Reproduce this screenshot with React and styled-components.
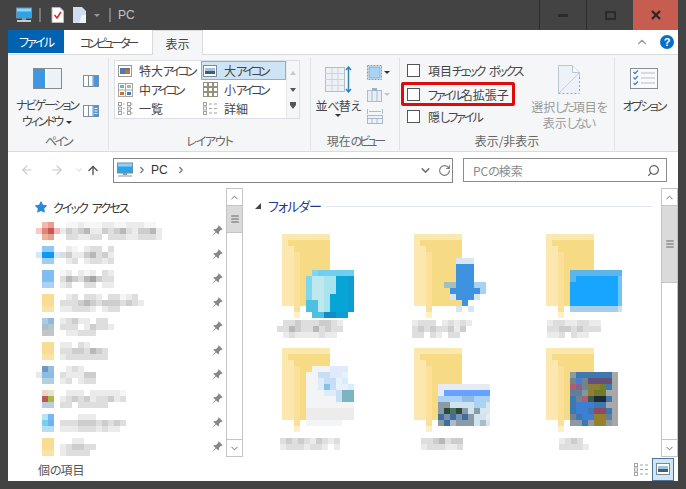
import React from 'react';
import styled, { createGlobalStyle } from 'styled-components';
import { ArrowLeft, ArrowRight, ArrowUp, ChevronDown, ChevronRight, ChevronUp, RotateCw, Search, Menu } from 'lucide-react';
import { BsPinAngleFill, BsStarFill } from 'react-icons/bs';

const GlobalStyle = createGlobalStyle`
  html, body { margin: 0; padding: 0; background: #434343; }
  * { box-sizing: border-box; }
  body {
    font-family: "Noto Sans CJK JP", "Noto Sans", sans-serif;
    font-feature-settings: "palt";
    font-size: 12px;
    color: #444;
  }
`;

// Kana run narrower than kanji in the original UI font
const Kana = styled.span`
  letter-spacing: ${p => p.$s ?? -1.8}px;
  word-spacing: 4px;
`;

// Window frame
const Frame = styled.div`
  width: 686px;
  height: 489px;
  background: #434343;
  padding: 0 8px 8px;
  display: flex;
  flex-direction: column;
  overflow: hidden;
`;

const TitleBar = styled.div`
  height: 30px;
  display: flex;
  align-items: center;
  margin-left: 8px;
  flex-shrink: 0;
`;

const TitleDivider = styled.span`
  width: 2px;
  height: 14px;
  background: #7a7a7a;
  margin: ${p => p.$margin};
`;

const TitleGap = styled.span`
  width: ${p => p.$width}px;
`;

const TitleText = styled.span`
  font-family: "Liberation Sans", sans-serif;
  font-size: 12px;
  color: #c4c4c4;
`;

const WindowButtons = styled.div`
  margin-left: auto;
  display: flex;
  height: 30px;
`;

const WindowButton = styled.div`
  width: ${p => (p.$close ? 45 : 47)}px;
  height: 100%;
  display: flex;
  align-items: center;
  justify-content: center;
  background: ${p => (p.$close ? '#c75c50' : 'transparent')};
  border-left: ${p => (p.$close ? 'none' : '1px solid #2c2c2c')};
  color: #2b2b2b;
`;

// Ribbon
const TabRow = styled.div`
  height: 25px;
  background: #fff;
  display: flex;
  align-items: stretch;
  border-bottom: 1px solid #dadbdc;
  flex-shrink: 0;
`;

const Tab = styled.div`
  width: ${p => p.$width}px;
  display: flex;
  align-items: center;
  justify-content: center;
  color: ${p => (p.$file ? '#fff' : '#444')};
  background: ${p => (p.$file ? '#0063b1' : p.$active ? '#f5f6f7' : '#fff')};
  border: ${p => (p.$active ? '1px solid #dadbdc' : 'none')};
  border-bottom: none;
  margin-bottom: ${p => (p.$active ? '-1px' : p.$file ? '1px' : '0')};
`;

const TabTools = styled.div`
  margin-left: auto;
  display: flex;
  align-items: center;
  gap: 11px;
  padding-right: 4px;
  color: #999;
`;

const HelpBadge = styled.div`
  width: 14px;
  height: 14px;
  border-radius: 50%;
  background: #0a6fc4;
  color: #fff;
  font-family: "Liberation Sans", sans-serif;
  font-size: 11px;
  font-weight: 700;
  display: flex;
  align-items: center;
  justify-content: center;
`;

const Ribbon = styled.div`
  height: 97px;
  background: #f5f6f7;
  border-bottom: 1px solid #dadbdc;
  display: flex;
  flex-shrink: 0;
`;

const Group = styled.div`
  width: ${p => p.$width}px;
  height: 92px;
  margin-top: 3px;
  display: flex;
  flex-direction: column;
  border-right: ${p => (p.$last ? 'none' : '1px solid #e1e3e6')};
`;

const GroupBody = styled.div`
  height: 76px;
  display: flex;
`;

const GroupLabel = styled.div`
  text-align: center;
  color: #666;
  line-height: 18px;
  white-space: nowrap;
`;

const LargeButton = styled.div`
  display: flex;
  flex-direction: column;
  align-items: center;
  flex-shrink: 0;
  width: ${p => p.$width}px;
  padding-top: ${p => p.$top || 0}px;
  line-height: 16px;
  text-align: center;
  white-space: nowrap;
  color: ${p => (p.$disabled ? '#9a9a9a' : '#444')};
`;

const IconSlot = styled.div`
  height: ${p => p.$height}px;
  display: flex;
  align-items: center;
  justify-content: center;
  margin-bottom: ${p => p.$after}px;
`;

const SmallIconColumn = styled.div`
  display: flex;
  flex-direction: column;
  gap: ${p => p.$gap}px;
  padding-top: ${p => p.$top}px;
  margin-left: ${p => p.$left}px;
`;

const SmallIconRow = styled.div`
  display: flex;
  align-items: center;
  gap: 2px;
`;

const Caret = styled.span`
  display: inline-block;
  width: 0;
  height: 0;
  border-left: 3px solid transparent;
  border-right: 3px solid transparent;
  border-top: 3px solid ${p => p.$color || '#333'};
  vertical-align: middle;
  margin-left: ${p => p.$left || 0}px;
`;

const Gallery = styled.div`
  margin: 2px 0 0 5px;
  width: 186px;
  height: 59px;
  display: flex;
  border: 1px solid #dcdfe3;
  background: #fff;
`;

const GalleryGrid = styled.div`
  width: 172px;
  display: grid;
  grid-template-columns: 85px 85px;
  grid-auto-rows: 19px;
  padding-left: 1px;
  border-right: 1px solid #e6e8ea;
`;

const GalleryItem = styled.div`
  display: flex;
  align-items: center;
  padding-left: 2px;
  white-space: nowrap;
  background: ${p => (p.$selected ? '#cde4f7' : 'transparent')};
  outline: ${p => (p.$selected ? '1px solid #7eb4e0' : 'none')};
  outline-offset: -1px;
`;

const GalleryIcon = styled.span`
  width: 21px;
  display: flex;
  flex-shrink: 0;
`;

const GalleryArrows = styled.div`
  flex: 1;
  background: #f5f6f7;
  display: flex;
  flex-direction: column;
  align-items: center;
  justify-content: space-around;
  padding: 3px 0;
`;

const ArrowGlyph = styled.span`
  width: 0;
  height: 0;
  border-left: 3px solid transparent;
  border-right: 3px solid transparent;
  ${p => (p.$up ? 'border-bottom: 4px solid #c8c8c8;' : 'border-top: 4px solid #555;')}
  ${p => p.$bar && 'box-shadow: 0 -3px 0 0 #555;'}
`;

const CheckList = styled.div`
  padding: 1px 0 0 1px;
  display: flex;
  flex-direction: column;
  width: 125px;
  flex-shrink: 0;
`;

const CheckRow = styled.div`
  height: 23px;
  width: ${p => (p.$marked ? '114px' : '124px')};
  padding-left: 6px;
  display: flex;
  align-items: center;
  gap: 8px;
  white-space: nowrap;
  color: #444;
  ${p => p.$marked && `
    height: 24px;
    margin-bottom: -1px;
    border-radius: 2px;
    box-shadow: inset 0 0 0 3px #e00b0b;
  `}
`;

const CheckBox = styled.span`
  width: 13px;
  height: 13px;
  flex-shrink: 0;
  border: 1px solid #555;
  background: #fff;
`;

// Address bar
const AddressRow = styled.div`
  height: 36px;
  background: #fff;
  display: flex;
  align-items: center;
  flex-shrink: 0;
`;

const NavButtons = styled.div`
  width: 105px;
  display: flex;
  align-items: center;
  padding-left: 12px;
  color: #c8c8c8;
`;

const NavSlot = styled.span`
  display: flex;
  flex-shrink: 0;
  width: ${p => p.$width}px;
  padding-left: ${p => p.$pad || 0}px;
  color: ${p => p.$color || 'inherit'};
`;

const AddressBox = styled.div`
  width: 340px;
  height: 25px;
  border: 1px solid #858585;
  display: flex;
  align-items: center;
  padding-left: 3px;
  color: #333;
  font-family: "Liberation Sans", sans-serif;
  font-size: 12px;
`;

const AddressTools = styled.div`
  margin-left: auto;
  display: flex;
  align-items: center;
  gap: 6px;
  padding-right: 1px;
  color: #777;
`;

const SearchBox = styled.div`
  width: 204px;
  height: 24px;
  margin-left: 10px;
  border: 1px solid #8c8c8c;
  display: flex;
  align-items: center;
  justify-content: space-between;
  padding: 0 6px 0 9px;
  color: #8a8a8a;
  svg { transform: scaleX(-1); color: #666; }
`;

// Main content
const Body = styled.div`
  height: 269px;
  background: #fff;
  display: flex;
  flex-shrink: 0;
  overflow: hidden;
`;

const Sidebar = styled.div`
  width: 218px;
  padding-top: 7px;
  overflow: hidden;
`;

const SideRow = styled.div`
  height: 24px;
  display: flex;
  align-items: center;
  position: relative;
  padding-left: ${p => p.$indent}px;
`;

const QuickLabel = styled.span`
  margin-left: 6px;
  color: #333;
`;

const PinSlot = styled.span`
  position: absolute;
  left: 204px;
  top: 6px;
  display: flex;
  color: #888;
`;

const Track = styled.div`
  width: 17px;
  display: flex;
  flex-direction: column;
  border: 1px solid #c4c4c4;
  flex-shrink: 0;
`;

const TrackButton = styled.div`
  height: 16px;
  display: flex;
  align-items: center;
  justify-content: center;
  color: #666;
  flex-shrink: 0;
`;

const Thumb = styled.div`
  height: ${p => p.$height}px;
  background: #dadada;
  border-top: 1px solid #c4c4c4;
  border-bottom: 1px solid #c4c4c4;
  display: flex;
  align-items: center;
  justify-content: center;
  color: #666;
  flex-shrink: 0;
`;

const TrackFill = styled.div`
  flex: 1;
  border-bottom: 1px solid #c4c4c4;
`;

const Content = styled.div`
  width: 418px;
  padding-left: 1px;
  display: flex;
  flex-direction: column;
  overflow: hidden;
`;

const SectionHead = styled.div`
  height: 46px;
  flex-shrink: 0;
  padding: 7px 8px 0 11px;
  display: flex;
  align-items: flex-start;
  color: #1e3a8c;
  font-size: 13px;
  line-height: 22px;
  white-space: nowrap;
`;

const SectionTriangle = styled.span`
  width: 0;
  height: 0;
  margin: 8px 7px 0 0;
  border-left: 6px solid transparent;
  border-bottom: 6px solid #444;
`;

const SectionLine = styled.span`
  flex: 1;
  height: 1px;
  margin: 11px 0 0 5px;
  background: #e2e8ee;
`;

const FolderGrid = styled.div`
  display: grid;
  flex-shrink: 0;
  grid-template-columns: repeat(3, 132px);
  grid-auto-rows: 114px;
`;

const FolderCell = styled.div`
  display: flex;
  flex-direction: column;
  align-items: center;
`;

const FolderLabel = styled.div`
  margin-top: ${p => p.$gap}px;
  display: flex;
`;

const StatusBar = styled.div`
  flex: 1;
  background: #fff;
  display: flex;
  align-items: center;
  padding-left: 30px;
  color: #555;
`;

const ViewSwitch = styled.div`
  margin-left: auto;
  display: flex;
  align-items: center;
  gap: 3px;
  padding-right: 4px;
`;

const ViewActive = styled.div`
  width: 22px;
  height: 23px;
  background: #cfe6f8;
  border: 1px solid #4a7396;
  display: flex;
  align-items: center;
  justify-content: center;
`;

// Drawn parts
const PcIcon = ({ width = 16 }) => (
  <svg width={width} height={width} viewBox="0 0 16 16">
    <rect x="0.5" y="1" width="15" height="10" fill="#2ba4ea" stroke="#6d8fa8" />
    <rect x="1" y="1.5" width="14" height="3" fill="#8fd4f7" />
    <rect x="6" y="11" width="4" height="2" fill="#8b9aa5" />
    <rect x="1" y="13" width="14" height="2" fill="#c3c9cd" />
  </svg>
);

const NoteIcon = () => (
  <svg width="13" height="16" viewBox="0 0 13 16">
    <path d="M1 .5h8l3.5 3.5v11.5H1z" fill="#fff" stroke="#b8b8b8" />
    <path d="M3.5 8l2.5 3 4-6" fill="none" stroke="#d22d2d" strokeWidth="1.6" />
  </svg>
);

const BlankDocIcon = () => (
  <svg width="13" height="16" viewBox="0 0 13 16">
    <path d="M0 0h9l4 4v12H0z" fill="#cfdded" />
    <path d="M9 8h4v8H6z" fill="#f0f4f8" />
  </svg>
);

const NavPaneIcon = () => (
  <svg width="29" height="21" viewBox="0 0 29 21">
    <rect x="0.5" y="0.5" width="28" height="20" fill="#fff" stroke="#8a8a8a" />
    <rect x="1" y="1" width="11" height="19" fill="#3f97e4" />
    <path d="M14 1h14v19H14z" fill="#edf2f7" />
  </svg>
);

const PaneIcon = ({ lines }) => (
  <svg width="16" height="12" viewBox="0 0 16 12">
    <rect x="0.5" y="0.5" width="15" height="11" fill="#fff" stroke="#7a8fa3" />
    <path d="M5.5 0v12M10 0v12" stroke="#7a8fa3" />
    <rect x="10.5" y="1" width="4.5" height="10" fill="#3d9ae8" />
    {lines && <path d="M11.5 3.5h3M11.5 6h3M11.5 8.5h3" stroke="#fff" />}
  </svg>
);

const LayoutIcon = ({ kind }) => {
  if (kind === 'xl') {
    return (
      <svg width="14" height="12" viewBox="0 0 14 12">
        <rect x="0.5" y="0.5" width="13" height="11" fill="#fff" stroke="#999" />
        <rect x="2" y="3" width="10" height="6" fill="#5577aa" />
        <rect x="7" y="5" width="5" height="4" fill="#c9722e" />
      </svg>
    );
  }
  if (kind === 'l') {
    return (
      <svg width="14" height="12" viewBox="0 0 14 12">
        <rect x="0.5" y="0.5" width="13" height="11" fill="#fff" stroke="#7b8a96" />
        <rect x="2" y="3" width="10" height="3" fill="#9fc4e0" />
        <rect x="2" y="6" width="10" height="3" fill="#4b5c68" />
      </svg>
    );
  }
  if (kind === 'm') {
    return (
      <svg width="15" height="14" viewBox="0 0 15 14">
        <rect x="0.5" y="0.5" width="14" height="13" fill="#fff" stroke="#a5a5a5" />
        <path d="M7.5 0v14M0 7h15" stroke="#a5a5a5" />
        <rect x="2" y="2" width="4" height="3" fill="#7ea9cc" />
        <rect x="9" y="2" width="4" height="3" fill="#9fb9a5" />
        <rect x="2" y="9" width="4" height="3" fill="#c9722e" />
        <rect x="9" y="9" width="4" height="3" fill="#4d77aa" />
      </svg>
    );
  }
  if (kind === 's') {
    return (
      <svg width="15" height="15" viewBox="0 0 15 15" fill="#fff" stroke="#9a8f7c">
        {[0, 5, 10].map(y => [0, 5, 10].map(x => (
          <rect key={`${x}-${y}`} x={x + 0.5} y={y + 0.5} width="4" height="4" />
        )))}
      </svg>
    );
  }
  if (kind === 'list') {
    return (
      <svg width="15" height="13" viewBox="0 0 15 13" fill="#fff" stroke="#a3a3a3">
        {[0, 9].map(x => [0, 4.5, 9].map(y => (
          <rect key={`${x}-${y}`} x={x + 0.5} y={y + 0.5} width="3" height="3" />
        )))}
        <path d="M5 2h1.5M5 6.5h1.5M5 11h1.5M13 2h1.5M13 6.5h1.5M13 11h1.5" />
      </svg>
    );
  }
  return (
    <svg width="15" height="13" viewBox="0 0 15 13" fill="#fff" stroke="#a3a3a3">
      {[0, 4.5, 9].map(y => <rect key={y} x="0.5" y={y + 0.5} width="3" height="3" />)}
      <path d="M6 2h3M11 2h3M6 6.5h3M11 6.5h3M6 11h3M11 11h3" />
    </svg>
  );
};

const SortIcon = () => (
  <svg width="27" height="27" viewBox="0 0 27 27">
    <rect x="0.5" y="1.5" width="19" height="24" fill="#eef1f5" stroke="#b5bcc5" />
    <path d="M0 7.5h19M0 13.5h19M0 19.5h19M7 2v23M13 2v23" stroke="#cdd3da" />
    <path d="M23.5 1v25M21 4l2.5-3 2.5 3M21 23l2.5 3 2.5-3" fill="none" stroke="#2c7fbd" strokeWidth="1.4" />
  </svg>
);

const ViewToolIcon = ({ kind }) => {
  if (kind === 'group') {
    return (
      <svg width="15" height="15" viewBox="0 0 15 15">
        <rect x="0.5" y="0.5" width="14" height="14" fill="none" stroke="#8e9aa6" strokeDasharray="2 1" />
        <rect x="2" y="2" width="11" height="11" fill="#a9d3ef" stroke="#7fb0d2" />
      </svg>
    );
  }
  if (kind === 'col') {
    return (
      <svg width="15" height="15" viewBox="0 0 15 15">
        <rect x="0.5" y="3.5" width="14" height="11" fill="#e7eef5" stroke="#adbdcc" />
        <path d="M5 3v12M10 3v12" stroke="#adbdcc" />
        <rect x="5" y="1" width="5" height="3" fill="#9fb2c4" />
      </svg>
    );
  }
  return (
    <svg width="16" height="15" viewBox="0 0 16 15">
      <path d="M.5 0v5M15.5 0v5M2 2.5h12" stroke="#a9bac9" fill="none" />
      <rect x="0.5" y="6.5" width="15" height="8" fill="#eef2f6" stroke="#a9bac9" />
      <path d="M0 9.5h16M5 9v6M10 9v6" stroke="#a9bac9" />
    </svg>
  );
};

const HideSelectedIcon = () => (
  <svg width="22" height="29" viewBox="0 0 22 29">
    <path d="M.5 28.5V.5h14l7 7v21z" fill="#edf2f9" stroke="none" />
    <path d="M.5 28V.5h14l7 7V12" fill="none" stroke="#b8c6d6" />
    <path d="M.5 28.5h21" stroke="#9aa5b0" strokeDasharray="2 2" />
    <path d="M21.5 12v16" stroke="#9aa5b0" strokeDasharray="2 2" />
    <path d="M1 28L21 8" stroke="#c4d0dd" />
    <path d="M14.5.5v7h7" fill="#f8fafc" stroke="#b8c6d6" />
  </svg>
);

const OptionIcon = () => (
  <svg width="28" height="21" viewBox="0 0 28 21">
    <rect x="0.5" y="0.5" width="27" height="20" fill="#f9fafb" stroke="#8a8f96" />
    <path d="M11 5h14M11 10h14M11 15h14" stroke="#b7bdc4" />
    <path d="M3.5 4l1.5 1.5L8 2.5M3.5 9.5L5 11l3-3M3.5 15L5 16.5l3-3" fill="none" stroke="#3a83c9" strokeWidth="1.3" />
  </svg>
);

// Mosaic pieces stand in for the pixelated parts of the screenshot
const Mosaic = ({ rows, palette, cell = 6 }) => (
  <svg width={rows[0].length * cell} height={rows.length * cell} shapeRendering="crispEdges">
    {rows.map((row, y) => [...row].map((c, x) => (
      c === '.' ? null : <rect key={`${x}-${y}`} x={x * cell} y={y * cell} width={cell} height={cell} fill={palette[c]} />
    )))}
  </svg>
);

const greys = { a: '#f6f6f6', b: '#ebebeb', c: '#dedede', d: '#cdcdcd', e: '#b8b8b8', f: '#a4a4a4' };

const folderTile = ['.ab.', '.ab.', '.cc.'];
const folderTileColors = { a: '#f7dc92', b: '#f7dc92', c: '#f9e3a8' };

const sideItems = [
  {
    icon: ['.ab.', 'cdef', '.gh.'],
    iconColors: { a: '#f5b8ae', b: '#e99d92', c: '#f9c9c9', d: '#e28478', e: '#c8584e', f: '#f5b8bb', g: '#eeb39b', h: '#e3a28d' },
    text: ['.aabaaabbaabbbaa.', 'bdcdebbdcdecbddeb', '.ccbbcc.cccbbcccb'],
  },
  {
    icon: ['.ab.', 'cdec', '.ff.'],
    iconColors: { a: '#8dc9f8', b: '#8dc9f8', c: '#d3e9fb', d: '#0d9af2', e: '#0d9af2', f: '#9ecff8' },
    text: ['.ba.bcc.c', 'cdbbdecdb', '.bc.bccbc'],
  },
  {
    icon: ['.ab.', '.ab.', '.cc.'],
    iconColors: { a: '#82bdf2', b: '#82bdf2', c: '#a9d2f5' },
    text: ['ab.bab.cb', 'cedcefdcc', 'bc..cc.bb'],
  },
  {
    icon: folderTile,
    iconColors: folderTileColors,
    text: ['.bc.ccb.ccabc.', 'cccdedcdddcdcb', 'bbcccb.bcc....'],
  },
  {
    icon: ['.ab.', '.cd.', '.ee.'],
    iconColors: { a: '#a8cce8', b: '#8fb9da', c: '#a9bfcc', d: '#b8c6cc', e: '#c2c6c6' },
    text: ['bcdbb.cc.', 'ccc.bdccb', '.bbccc...'],
  },
  {
    icon: folderTile,
    iconColors: folderTileColors,
    text: ['bb.cb...', 'ccddcedc', 'bccccccc'],
  },
  {
    icon: ['.ab.', 'cdd.', '.ee.'],
    iconColors: { a: '#6c98c4', b: '#94bde0', c: '#e8e8e8', d: '#8ebbe2', e: '#b4cfe2' },
    text: ['.bcb..', 'cbbbdd', 'bc.bcc'],
  },
  {
    icon: ['.ab.', '.cd.', '.ee.'],
    iconColors: { a: '#e8d8c4', b: '#e9e2d0', c: '#b85a4c', d: '#a3bf3e', e: '#bccde0' },
    text: ['.bbb.bbbbba', 'bcdcdbccdbc', 'cc.ccccc...'],
  },
  {
    icon: ['.ab.', '.cd.', '.ee.'],
    iconColors: { a: '#b8e2f6', b: '#74b8f2', c: '#74d0f0', d: '#6eb2f0', e: '#b8def2' },
    text: ['...bbb.....', 'cccdddcdcdc', 'bbbcccbcbb.'],
  },
  {
    icon: folderTile,
    iconColors: folderTileColors,
    text: ['..bb..', 'bcddcc', 'bcccc.'],
  },
];

const folders = [
  {
    label: ['.ccdcccddcb', 'ccedccecdcc', '.bcbbbbcbb.'],
    gap: 2,
    overlayX: 44, overlayY: 36,
    overlay: ['.abbbbbb', 'accddeef', 'accddeef', 'accddeef', 'accdeeef', 'ggcdeeef', 'ggcdeeef', '.gghhff.'],
    colors: { a: '#7fd6ef', b: '#6ecfee', c: '#bfe8ee', d: '#a9e3ed', e: '#07a5d6', f: '#0a9fd0', g: '#4dbfe0', h: '#0f8ec6' },
  },
  {
    label: ['bccc.bcbcb', 'cdcdccdbd.', 'cc.cb.cc..'],
    gap: 2,
    overlayX: 50, overlayY: 24,
    overlay: ['..aaa..', '..bbb..', '..bbb..', '..bbb..', 'ccbbbdd', '.bbbbbd', '.abbba.', '...b...', '..a.a..'],
    colors: { a: '#d8e6f2', b: '#3d93e0', c: '#a4c0bc', d: '#a9d2f2' },
  },
  {
    label: ['bccbbccbb', 'ccddcdccc', 'bbc.cbb..'],
    gap: 2,
    overlayX: 44, overlayY: 36,
    overlay: ['aaaaaaaaa', 'abbbbbbbc', 'bbbbbbbbc', 'bbbbbbbbc', 'bbbbbbbbc', 'bbbbbbbbc', 'dddddddde'],
    colors: { a: '#5cb6ec', b: '#18a5ff', c: '#6fc4f8', d: '#a8cde6', e: '#cfdfee' },
  },
  {
    label: ['cdcdcbdcbc', 'bcccbccb.b'],
    gap: 6,
    overlayX: 44, overlayY: 18,
    overlay: ['.aaabbb.', 'aaccbbd.', 'aabccde.', 'aabfcdde', 'aaabbcgg', 'aaaaacgg', 'aaaaaaaa', 'hhhhhhhh', 'hhhhhhhh', 'aaaaaa..'],
    colors: { a: '#f2f4f5', b: '#dfeafa', c: '#c6def6', d: '#e8f2fb', e: '#d8ecfb', f: '#85c2ea', g: '#7cb4c2', h: '#ececec' },
  },
  {
    label: ['ccdecdd', 'bcccbbc'],
    gap: 6,
    overlayX: 44, overlayY: 36,
    overlay: ['aaaaaaaaa', 'abbbbbbbb', 'ccccddccc', 'eeffffccg', 'ehihefegg', 'jkjkjeffa', 'ejleeeflg'],
    colors: { a: '#e6ebf4', b: '#66a2ff', c: '#a9d2f5', d: '#8fbbe6', e: '#8a9ba5', f: '#cfe4ef', g: '#d9e6ec', h: '#2b4a3a', i: '#52735e', j: '#3f6e9c', k: '#7894b4', l: '#aabccc' },
  },
  {
    label: ['bcdc.', 'ccccb'],
    gap: 6,
    overlayX: 44, overlayY: 24,
    overlay: ['abbbbbbc', 'dedffffc', 'ghdiijbc', 'kklimmcc', 'bdgoppbc', 'bqqqbbcc', 'bqqbrrbc', 'dbqqsskc', 'aabassac'],
    colors: { a: '#8d99a3', b: '#3f77b0', c: '#a8a8a8', d: '#71838f', e: '#4480cf', f: '#66507a', g: '#aa6070', h: '#88628f', i: '#8e7f34', j: '#76802a', k: '#5f7f9a', l: '#8595a3', m: '#6f7a2a', o: '#3c5a46', p: '#1d2a3c', q: '#3e7fd6', r: '#8f4960', s: '#96802e' },
  },
];

const FolderArt = ({ item }) => (
  <svg width="96" height="84" viewBox="0 0 96 84" shapeRendering="crispEdges">
    <rect x="20" y="0" width="48" height="72" fill="#fbe8ac" />
    <rect x="26" y="6" width="42" height="66" fill="#f6da84" />
    <rect x="20" y="12" width="12" height="60" fill="#fce7ae" />
    <rect x="32" y="18" width="6" height="60" fill="#fae098" />
    <rect x="32" y="78" width="6" height="6" fill="#fdf0c4" />
    <g transform={`translate(${item.overlayX} ${item.overlayY})`}>
      {item.overlay.map((row, y) => [...row].map((c, x) => (
        c === '.' ? null : <rect key={`${x}-${y}`} x={x * 6} y={y * 6} width="6" height="6" fill={item.colors[c]} />
      )))}
    </g>
  </svg>
);

const FolderItem = ({ item }) => (
  <FolderCell>
    <FolderArt item={item} />
    <FolderLabel $gap={item.gap}>
      <Mosaic rows={item.label} palette={greys} />
    </FolderLabel>
  </FolderCell>
);

const ScrollBar = ({ thumb }) => (
  <Track>
    <TrackButton><ChevronUp size={11} /></TrackButton>
    <Thumb $height={thumb}><Menu size={10} strokeWidth={2.5} /></Thumb>
    <TrackFill />
    <TrackButton><ChevronDown size={11} /></TrackButton>
  </Track>
);

const layouts = [
  { kind: 'xl', head: '特大', kana: 'アイコン' },
  { kind: 'l', head: '大', kana: 'アイコン', selected: true },
  { kind: 'm', head: '中', kana: 'アイコン' },
  { kind: 's', head: '小', kana: 'アイコン' },
  { kind: 'list', head: '一覧' },
  { kind: 'detail', head: '詳細' },
];

export default function App() {
  return (
    <>
      <GlobalStyle />
      <Frame>
        <TitleBar>
          <PcIcon />
          <TitleDivider $margin="0 10px 0 7px" />
          <NoteIcon />
          <TitleGap $width={9} />
          <BlankDocIcon />
          <Caret $color="#999" $left={8} />
          <TitleDivider $margin="0 7px 0 9px" />
          <TitleText>PC</TitleText>
          <WindowButtons>
            <WindowButton>
              <svg width="10" height="3"><rect width="10" height="3" fill="#2b2b2b" /></svg>
            </WindowButton>
            <WindowButton>
              <svg width="11" height="9"><rect x="1" y="1" width="9" height="7" fill="none" stroke="#2b2b2b" strokeWidth="2" /></svg>
            </WindowButton>
            <WindowButton $close>
              <svg width="10" height="10"><path d="M1 1l8 8M9 1l-8 8" stroke="#2b2b2b" strokeWidth="2.4" /></svg>
            </WindowButton>
          </WindowButtons>
        </TitleBar>

        <TabRow>
          <Tab $file $width={56}><Kana>ファイル</Kana></Tab>
          <Tab $width={88}><Kana $s={-3}>コンピューター</Kana></Tab>
          <Tab $active $width={51}>表示</Tab>
          <TabTools>
            <ChevronUp size={14} />
            <HelpBadge>?</HelpBadge>
          </TabTools>
        </TabRow>

        <Ribbon>
          <Group $width={101}>
            <GroupBody>
              <LargeButton $width={78} $top={10}>
                <IconSlot $height={21} $after={8}><NavPaneIcon /></IconSlot>
                <Kana $s={-2.1}>ナビゲーション</Kana>
                <div><Kana $s={-2.2}>ウィンドウ</Kana><Caret $left={4} /></div>
              </LargeButton>
              <SmallIconColumn $gap={18} $top={17} $left={-3}>
                <PaneIcon />
                <PaneIcon lines />
              </SmallIconColumn>
            </GroupBody>
            <GroupLabel><Kana $s={-2.4}>ペイン</Kana></GroupLabel>
          </Group>

          <Group $width={202}>
            <GroupBody>
              <Gallery>
                <GalleryGrid>
                  {layouts.map(l => (
                    <GalleryItem key={l.head} $selected={l.selected}>
                      <GalleryIcon><LayoutIcon kind={l.kind} /></GalleryIcon>
                      {l.head}
                      {l.kana && <Kana $s={-3}>{l.kana}</Kana>}
                    </GalleryItem>
                  ))}
                </GalleryGrid>
                <GalleryArrows>
                  <ArrowGlyph $up />
                  <ArrowGlyph />
                  <ArrowGlyph $bar />
                </GalleryArrows>
              </Gallery>
            </GroupBody>
            <GroupLabel><Kana $s={-1.2}>レイアウト</Kana></GroupLabel>
          </Group>

          <Group $width={89}>
            <GroupBody>
              <LargeButton $width={54} $top={8}>
                <IconSlot $height={27} $after={5}><SortIcon /></IconSlot>
                <div>並<Kana $s={-1}>べ</Kana>替<Kana $s={-1}>え</Kana></div>
                <Caret />
              </LargeButton>
              <SmallIconColumn $gap={7} $top={7} $left={2}>
                <SmallIconRow><ViewToolIcon kind="group" /><Caret /></SmallIconRow>
                <SmallIconRow><ViewToolIcon kind="col" /><Caret $color="#c2c2c2" /></SmallIconRow>
                <SmallIconRow><ViewToolIcon kind="fit" /></SmallIconRow>
              </SmallIconColumn>
            </GroupBody>
            <GroupLabel>現在<Kana $s={-3}>のビュー</Kana></GroupLabel>
          </Group>

          <Group $width={215}>
            <GroupBody>
              <CheckList>
                <CheckRow><CheckBox /><span>項目<Kana $s={-2.2}>チェック ボックス</Kana></span></CheckRow>
                <CheckRow $marked><CheckBox /><span><Kana $s={-2.2}>ファイル</Kana>名拡張子</span></CheckRow>
                <CheckRow><CheckBox /><span>隠<Kana $s={-2}>しファイル</Kana></span></CheckRow>
              </CheckList>
              <LargeButton $width={87} $top={7} $disabled>
                <IconSlot $height={29} $after={5}><HideSelectedIcon /></IconSlot>
                <div>選択<Kana $s={-2}>した</Kana>項目<Kana $s={-2}>を</Kana></div>
                <div>表示<Kana $s={-2}>しない</Kana></div>
              </LargeButton>
            </GroupBody>
            <GroupLabel>表示/非表示</GroupLabel>
          </Group>

          <Group $width={60} $last>
            <GroupBody>
              <LargeButton $width={58} $top={10}>
                <IconSlot $height={21} $after={9}><OptionIcon /></IconSlot>
                <Kana $s={-2}>オプション</Kana>
              </LargeButton>
            </GroupBody>
          </Group>
        </Ribbon>

        <AddressRow>
          <NavButtons>
            <NavSlot $width={30}><ArrowLeft size={14} /></NavSlot>
            <NavSlot $width={24}><ArrowRight size={14} /></NavSlot>
            <NavSlot $width={12}><ChevronDown size={10} /></NavSlot>
            <NavSlot $width={14} $color="#555"><ArrowUp size={15} strokeWidth={2.4} /></NavSlot>
          </NavButtons>
          <AddressBox>
            <PcIcon />
            <NavSlot $width={18} $pad={4} $color="#777"><ChevronRight size={10} strokeWidth={3} /></NavSlot>
            PC
            <NavSlot $width={20} $pad={8} $color="#777"><ChevronRight size={10} strokeWidth={3} /></NavSlot>
            <AddressTools>
              <ChevronDown size={13} strokeWidth={3} />
              <RotateCw size={13} strokeWidth={2} />
            </AddressTools>
          </AddressBox>
          <SearchBox>
            <span>PC<Kana $s={-1}>の</Kana>検索</span>
            <Search size={13} strokeWidth={2.4} />
          </SearchBox>
        </AddressRow>

        <Body>
          <Sidebar>
            <SideRow $indent={27}>
              <BsStarFill size={12} color="#2b88d8" />
              <QuickLabel><Kana $s={-1.9}>クイック アクセス</Kana></QuickLabel>
            </SideRow>
            {sideItems.map((item, i) => (
              <SideRow key={i} $indent={28}>
                <Mosaic rows={item.icon} palette={item.iconColors} />
                <Mosaic rows={item.text} palette={greys} />
                <PinSlot><BsPinAngleFill size={11} /></PinSlot>
              </SideRow>
            ))}
          </Sidebar>
          <ScrollBar thumb={28} />
          <Content>
            <SectionHead>
              <SectionTriangle />
              <Kana $s={-1}>フォルダー</Kana>
              <SectionLine />
            </SectionHead>
            <FolderGrid>
              {folders.map((f, i) => <FolderItem key={i} item={f} />)}
            </FolderGrid>
          </Content>
          <ScrollBar thumb={78} />
        </Body>

        <StatusBar>
          <span>個<Kana $s={-1}>の</Kana>項目</span>
          <ViewSwitch>
            <LayoutIcon kind="detail" />
            <ViewActive><LayoutIcon kind="l" /></ViewActive>
          </ViewSwitch>
        </StatusBar>
      </Frame>
    </>
  );
}
